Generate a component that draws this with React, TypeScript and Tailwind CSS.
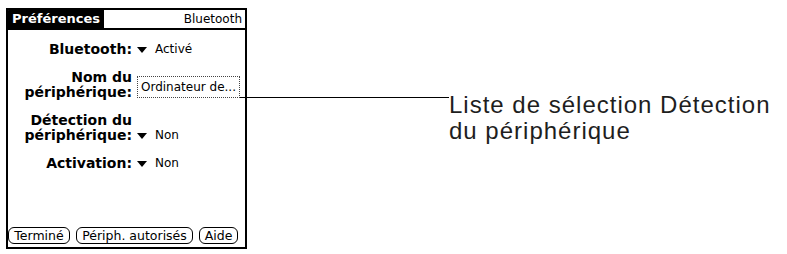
import { ReactNode } from 'react';

const palm = 'font-["DejaVu_Sans",sans-serif]';

function Caret() {
  return (
    <svg width="10" height="6" viewBox="0 0 10 6" className="shrink-0">
      <polygon points="0,0 10,0 5,6" fill="#000" />
    </svg>
  );
}

function Label({ children }: { children: ReactNode }) {
  return (
    <div className="w-[124px] shrink-0 text-right text-[14px] font-bold leading-[15px] text-black">
      {children}
    </div>
  );
}

function Picker({ value }: { value: string }) {
  return (
    <div className="ml-[5px] flex items-center h-[15px]">
      <Caret />
      <span className="ml-[8px] text-[12px] leading-[15px] text-black">{value}</span>
    </div>
  );
}

function PalmButton({ label, width }: { label: string; width: string }) {
  return (
    <div
      className={`${width} h-[17px] flex items-center justify-center rounded-[6px] border-[1.5px] border-black text-[12.5px] leading-[14px] text-black`}
    >
      {label}
    </div>
  );
}

export default function App() {
  return (
    <div className="relative w-[787px] h-[254px] bg-white flex overflow-hidden">
      <div className={`${palm} ml-[6px] mt-[8px] w-[241px] h-[241px] border-2 border-black flex flex-col`}>
        <div className="h-[20px] flex border-b-2 border-black">
          <div className="w-[96px] -mt-[2px] h-[22px] bg-black rounded-tl-[3px] pl-[4px] flex items-center text-[13px] font-bold text-white">
            Préférences
          </div>
          <div className="flex-1 flex items-center justify-end pr-[3px] text-[12px] text-black">Bluetooth</div>
        </div>

        <div className="pt-[12px] flex flex-col gap-[13px]">
          <div className="flex items-end">
            <Label>Bluetooth:</Label>
            <Picker value="Activé" />
          </div>
          <div className="flex items-end">
            <Label>
              Nom du
              <br />
              périphérique:
            </Label>
            <div className="ml-[5px] mb-[2px] w-[103px] h-[22px] border border-dotted border-[#444] pl-[3px] flex items-center text-[12px] text-black whitespace-nowrap">
              Ordinateur de...
            </div>
          </div>
          <div className="flex items-end">
            <Label>
              Détection du
              <br />
              périphérique:
            </Label>
            <Picker value="Non" />
          </div>
          <div className="flex items-end">
            <Label>Activation:</Label>
            <Picker value="Non" />
          </div>
        </div>

        <div className="mt-auto mb-[3px] flex gap-[6px]">
          <PalmButton label="Terminé" width="w-[62px]" />
          <PalmButton label="Périph. autorisés" width="w-[117px]" />
          <PalmButton label="Aide" width="w-[39px]" />
        </div>
      </div>

      <div className="absolute left-[240px] top-[97px] w-[209px] h-px bg-black" />

      <div className='ml-[202px] mt-[92px] text-[24px] leading-[26px] tracking-[1px] text-[#1e1e1e] font-["Liberation_Sans",Arial,sans-serif] whitespace-nowrap'>
        Liste de sélection Détection
        <br />
        du périphérique
      </div>
    </div>
  );
}
